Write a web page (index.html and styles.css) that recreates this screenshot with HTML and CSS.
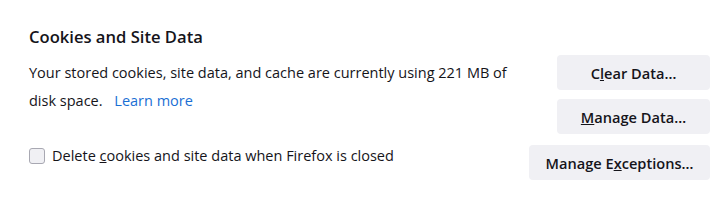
FILE: index.html
```html
<!DOCTYPE html>
<html lang="en">
<head>
    <meta charset="UTF-8">
    <title>Cookies and Site Data</title>
    <link rel="stylesheet" href="styles.css">
</head>
<body>
<section class="prefs-group">
  <h2 class="group-title">Cookies and Site Data</h2>

  <div class="pref-row">
    <p class="site-data-text">
      Your stored cookies, site data, and cache are currently using 221 MB of<br>
      disk space. <a href="#" class="learn-more">Learn more</a>
    </p>
    <div class="btn-col">
      <button class="pref-btn">C<u>l</u>ear Data…</button>
      <button class="pref-btn"><u>M</u>anage Data…</button>
    </div>
  </div>

  <div class="pref-row check-row">
    <label class="check-label">
      <input type="checkbox" class="pref-check">
      <span>Delete <u>c</u>ookies and site data when Firefox is closed</span>
    </label>
    <button class="pref-btn wide">Manage E<u>x</u>ceptions…</button>
  </div>
</section>
</body>
</html>
```

FILE: styles.css
```css
body {
  margin: 0;
  background: #fff;
  color: #15141a;
  font-family: "Open Sans", "Noto Sans", sans-serif;
  font-size: 14.5px;
}

.prefs-group {
  padding: 25px 18px 0 29px;
}

.group-title {
  margin: 0 0 4px;
  font-size: 16.6px;
  font-weight: 600;
  line-height: 24px;
}

.pref-row {
  display: flex;
  justify-content: space-between;
  align-items: flex-start;
}

.site-data-text {
  margin: 6px 0 0;
  line-height: 28px;
}

.learn-more {
  color: #1a6fd4;
  text-decoration: none;
  margin-left: 8px;
}

.btn-col {
  display: flex;
  flex-direction: column;
  gap: 9px;
  margin-top: 2px;
}

.pref-btn {
  font-family: inherit;
  font-size: 14.6px;
  font-weight: 600;
  color: #15141a;
  background: #f0f0f4;
  border: none;
  border-radius: 4px;
  height: 35px;
  width: 153px;
  padding: 0 12px;
}

.pref-btn.wide {
  width: 181px;
}

.check-row {
  margin-top: 11px;
}

.check-label {
  display: flex;
  align-items: center;
  gap: 7px;
  padding-top: 1px;
  line-height: 20px;
}

.pref-check {
  appearance: none;
  width: 16px;
  height: 16px;
  margin: 0;
  border: 1px solid #a8a8b2;
  border-radius: 3px;
  background: #f0f0f4;
}
```
